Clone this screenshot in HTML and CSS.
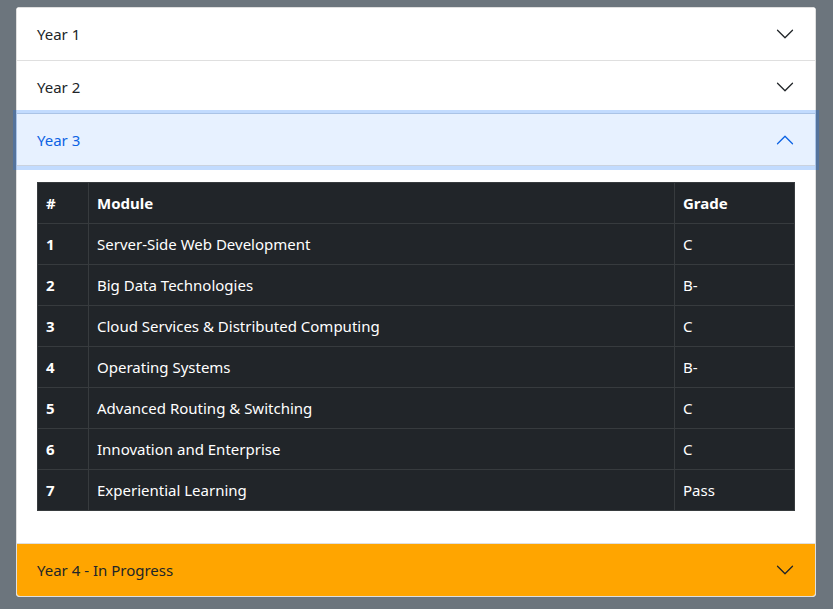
FILE: index.html
```html
<!DOCTYPE html>
<html lang="en">
<head>
<meta charset="utf-8">
<title>Modules</title>
<link rel="stylesheet" href="styles.css">
</head>
<body>
<div class="accordion">
  <div class="item">
    <button class="header"><span>Year 1</span>
      <svg class="chev" viewBox="0 0 16 16"><path fill="currentColor" fill-rule="evenodd" d="M1.646 4.646a.5.5 0 0 1 .708 0L8 10.293l5.646-5.647a.5.5 0 0 1 .708.708l-6 6a.5.5 0 0 1-.708 0l-6-6a.5.5 0 0 1 0-.708z"/></svg>
    </button>
  </div>
  <div class="item">
    <button class="header"><span>Year 2</span>
      <svg class="chev" viewBox="0 0 16 16"><path fill="currentColor" fill-rule="evenodd" d="M1.646 4.646a.5.5 0 0 1 .708 0L8 10.293l5.646-5.647a.5.5 0 0 1 .708.708l-6 6a.5.5 0 0 1-.708 0l-6-6a.5.5 0 0 1 0-.708z"/></svg>
    </button>
  </div>
  <div class="item">
    <button class="header open"><span>Year 3</span>
      <svg class="chev up" viewBox="0 0 16 16"><path fill="currentColor" fill-rule="evenodd" d="M1.646 4.646a.5.5 0 0 1 .708 0L8 10.293l5.646-5.647a.5.5 0 0 1 .708.708l-6 6a.5.5 0 0 1-.708 0l-6-6a.5.5 0 0 1 0-.708z"/></svg>
    </button>
    <div class="body">
      <table class="grades">
        <thead>
          <tr><th class="c-num">#</th><th>Module</th><th class="c-grade">Grade</th></tr>
        </thead>
        <tbody>
          <tr><th>1</th><td>Server-Side Web Development</td><td>C</td></tr>
          <tr><th>2</th><td>Big Data Technologies</td><td>B-</td></tr>
          <tr><th>3</th><td>Cloud Services &amp; Distributed Computing</td><td>C</td></tr>
          <tr><th>4</th><td>Operating Systems</td><td>B-</td></tr>
          <tr><th>5</th><td>Advanced Routing &amp; Switching</td><td>C</td></tr>
          <tr><th>6</th><td>Innovation and Enterprise</td><td>C</td></tr>
          <tr><th>7</th><td>Experiential Learning</td><td>Pass</td></tr>
        </tbody>
      </table>
    </div>
  </div>
  <div class="item last">
    <button class="header orange"><span>Year 4 - In Progress</span>
      <svg class="chev" viewBox="0 0 16 16"><path fill="currentColor" fill-rule="evenodd" d="M1.646 4.646a.5.5 0 0 1 .708 0L8 10.293l5.646-5.647a.5.5 0 0 1 .708.708l-6 6a.5.5 0 0 1-.708 0l-6-6a.5.5 0 0 1 0-.708z"/></svg>
    </button>
  </div>
</div>
</body>
</html>
```

FILE: styles.css
```css
* { box-sizing: border-box; }
html, body {
  margin: 0;
  background: #6c757d;
}
body {
  padding: 7px 17px 0 16px;
  font-family: "Noto Sans", "Open Sans", sans-serif;
  font-size: 15px;
  color: #212529;
}
.accordion {
  width: 800px;
  background: #fff;
  border-radius: 4px;
}
.item {
  border: 1px solid rgba(0,0,0,.125);
  border-top: 0;
  background: #fff;
}
.item:first-child {
  border-top: 1px solid rgba(0,0,0,.125);
  border-radius: 4px 4px 0 0;
}
.item.last {
  border-radius: 0 0 4px 4px;
  overflow: hidden;
}
.header {
  display: flex;
  align-items: center;
  justify-content: space-between;
  width: 100%;
  height: 52px;
  padding: 0 20px 0 20px;
  border: 0;
  background: #fff;
  font: inherit;
  color: #212529;
  text-align: left;
  position: relative;
}
.header.open {
  background: #e7f1ff;
  color: #0c63e4;
  box-shadow: inset 0 -1px 0 rgba(0,0,0,.125), 0 0 0 4px rgba(13,110,253,.25);
  z-index: 2;
}
.header.orange {
  background: #ffa500;
}
.chev {
  width: 20px;
  height: 20px;
  flex: none;
}
.chev.up {
  transform: rotate(180deg);
}
.body {
  padding: 16px 20px;
}
.grades {
  width: 100%;
  border-collapse: collapse;
  background: #212529;
  color: #fff;
  margin-bottom: 16px;
  font-size: 15px;
}
.grades th, .grades td {
  border: 1px solid #373b3e;
  padding: 8px;
  height: 41px;
  text-align: left;
  line-height: 24px;
}
.grades th { font-weight: 700; }
.grades td { font-weight: 400; }
.c-num { width: 51px; }
.c-grade { width: 120px; }
```
